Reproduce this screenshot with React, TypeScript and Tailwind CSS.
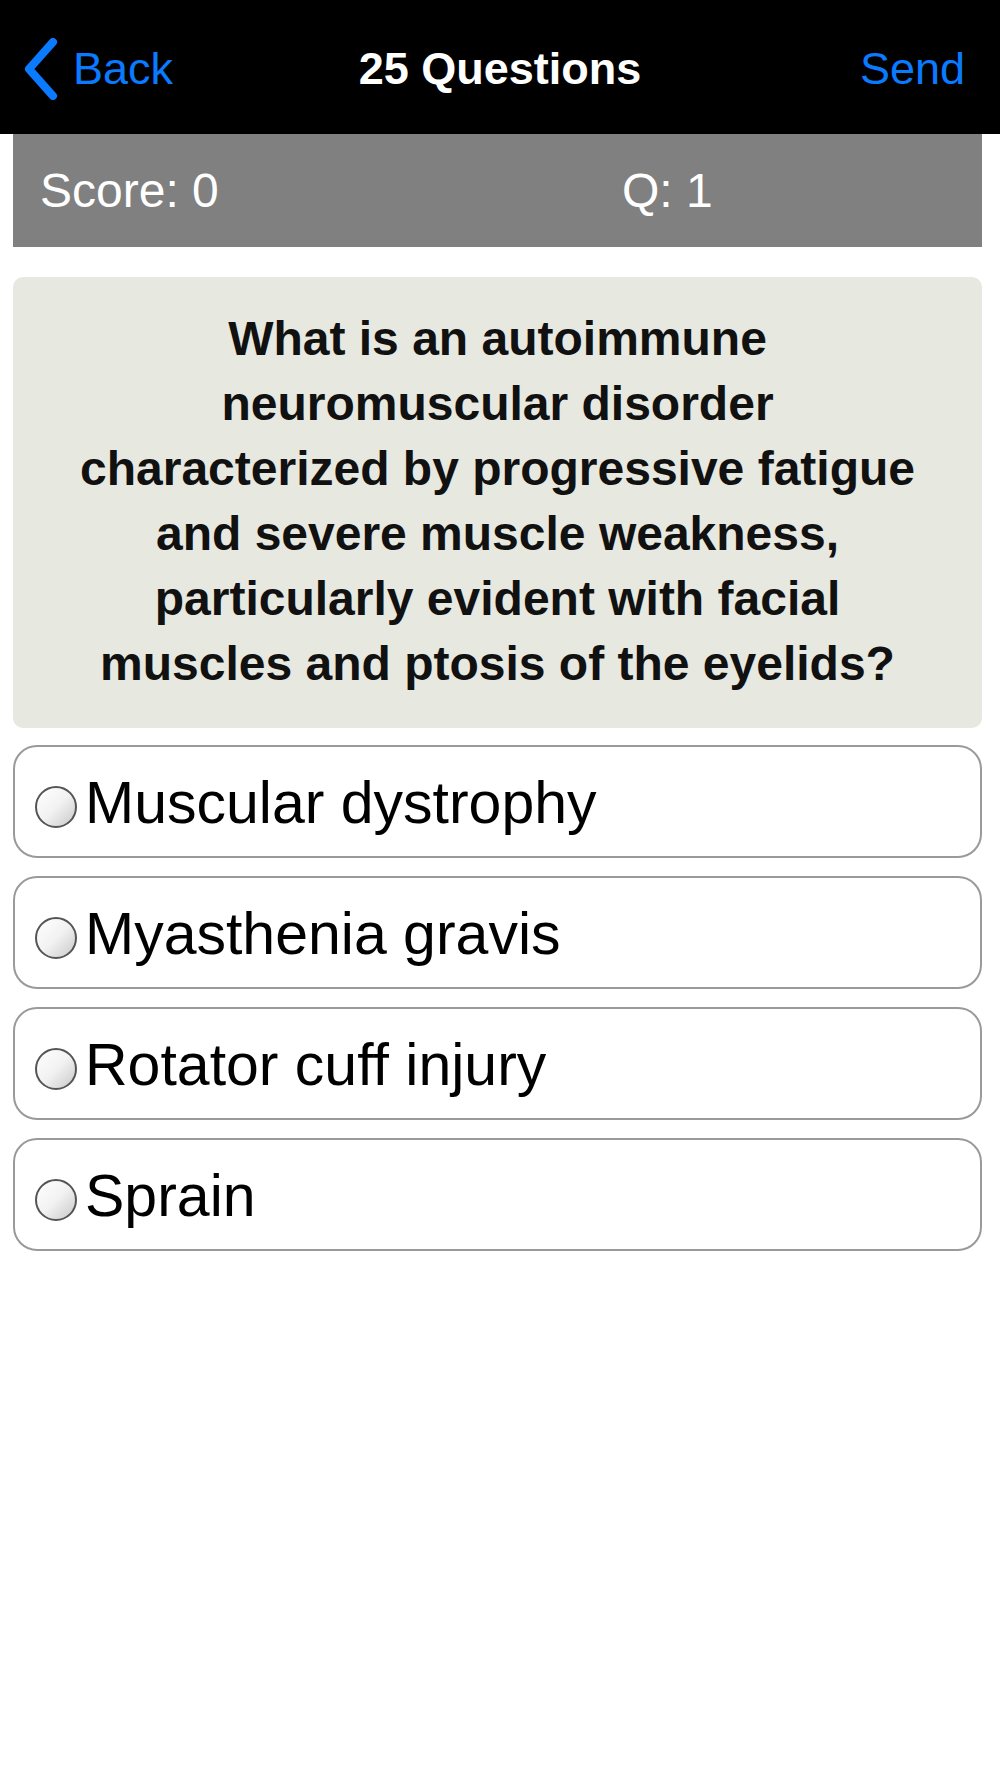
import React from 'react';

const options = ['Muscular dystrophy', 'Myasthenia gravis', 'Rotator cuff injury', 'Sprain'];

function Radio() {
  return (
    <span className="mt-[11px] h-[42px] w-[42px] shrink-0 rounded-full border-2 border-[#555] bg-linear-to-br from-white via-[#f2f2f2] to-[#c9c9c9]" />
  );
}

export default function App() {
  return (
    <div className="min-h-[1778px] bg-white font-['Liberation_Sans',Arial,sans-serif]">
      {/* Nav bar */}
      <header className="grid h-[134px] grid-cols-[1fr_auto_1fr] items-center bg-black pt-[3px]">
        <div className="flex items-center pl-[24px] text-[#0a7aff]">
          <svg width="34" height="62" viewBox="0 0 34 62" fill="none">
            <path d="M29 4 L5 31 L29 58" stroke="#0a7aff" strokeWidth="8" strokeLinecap="round" strokeLinejoin="round" />
          </svg>
          <span className="ml-[15px] text-[45px] leading-none">Back</span>
        </div>
        <h1 className="text-[45px] font-bold leading-none text-white">25 Questions</h1>
        <div className="pr-[35px] text-right text-[45px] leading-none text-[#0a7aff]">Send</div>
      </header>

      <main className="pl-[13px] pr-[18px]">
        {/* Score bar */}
        <div className="grid h-[113px] grid-cols-[582px_1fr] items-center bg-[#808080] pl-[27px] text-[48px] leading-none text-white">
          <span>Score: 0</span>
          <span>Q: 1</span>
        </div>

        {/* Question */}
        <div className="mt-[30px] h-[451px] rounded-[10px] bg-[#e7e8df] px-12 pt-[29px] pb-[32px] text-center text-[48px] font-bold leading-[65px] text-[#111]">
          What is an autoimmune neuromuscular disorder characterized by progressive fatigue and severe muscle weakness, particularly evident with facial muscles and ptosis of the eyelids?
        </div>

        {/* Answers */}
        <div className="mt-[17px] flex flex-col gap-[18px]">
          {options.map((o) => (
            <div key={o} className="flex h-[113px] items-center rounded-[24px] border-2 border-[#9a9a9a] pl-[20px]">
              <Radio />
              <span className="ml-[8px] pt-[3px] text-[59px] leading-none text-black">{o}</span>
            </div>
          ))}
        </div>
      </main>
    </div>
  );
}
